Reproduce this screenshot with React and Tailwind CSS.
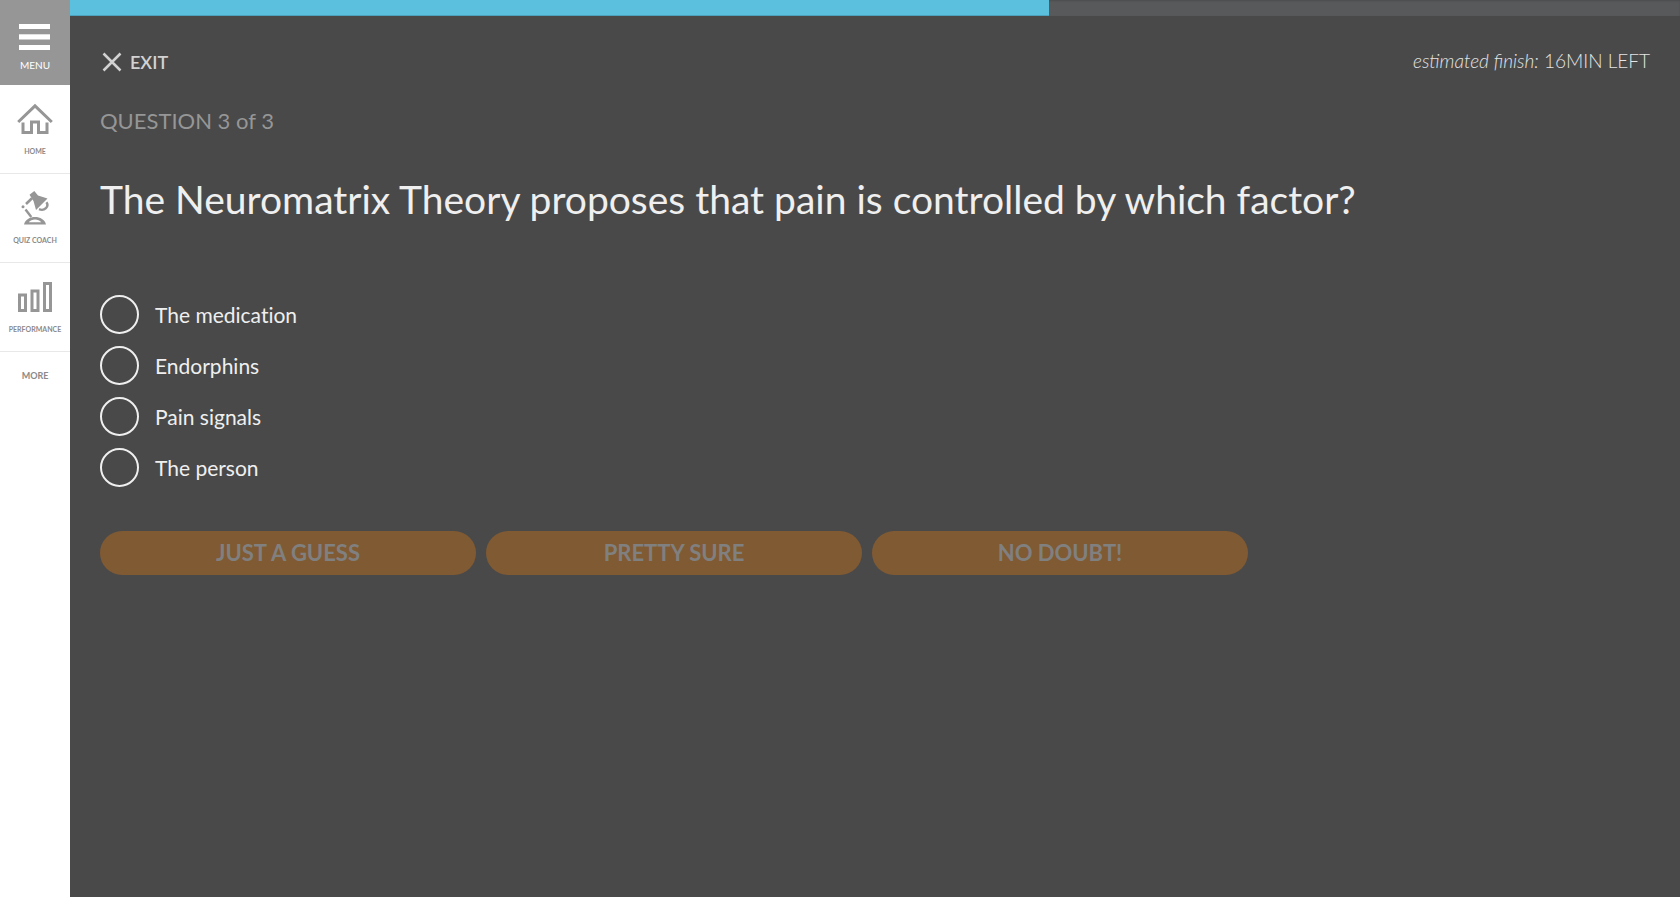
import React, { useState } from "react";

const ANSWERS = ["The medication", "Endorphins", "Pain signals", "The person"];
const CONFIDENCE = ["JUST A GUESS", "PRETTY SURE", "NO DOUBT!"];

function HomeIcon() {
  return (
    <svg width="36" height="32" viewBox="0 0 36 32" fill="none" stroke="#969696" strokeWidth="3" aria-hidden="true">
      <path d="M1.2 19 L18 2.8 L34.8 19" />
      <path d="M6 19.5 V29.5 H14.5 V19 H21.5 V29.5 H30 V19.5" />
    </svg>
  );
}

function LampIcon() {
  return (
    <svg width="30" height="36" viewBox="0 0 30 36" fill="none" stroke="#969696" aria-hidden="true">
      <path d="M9.5 4.8 L14.3 1 L18 5.5 L27.5 8.5 L16 20 L13.5 11 Z" fill="#969696" stroke="none" />
      <path d="M6 14 L12 8.2" strokeWidth="2.6" />
      <path d="M26.4 12.2 C29.5 16.5 24.5 21.5 19 19.2" strokeWidth="2.4" />
      <circle cx="3" cy="16.8" r="1.5" fill="#969696" stroke="none" />
      <path d="M5.5 19.5 L11.3 27" strokeWidth="2.4" />
      <path d="M4 34.5 C6 24.5 24 24.5 26 34.5 Z" fill="#969696" stroke="none" />
      <path d="M8.8 32.3 C11.5 28.6 18.5 28.6 21.2 32.3 Z" fill="#fff" stroke="none" />
    </svg>
  );
}

function BarsIcon() {
  return (
    <svg width="34" height="32" viewBox="0 0 34 32" fill="none" stroke="#969696" strokeWidth="3" aria-hidden="true">
      <rect x="1.5" y="14" width="6" height="15.5" />
      <rect x="14" y="10" width="6" height="19.5" />
      <rect x="26.5" y="2.5" width="6" height="27" />
    </svg>
  );
}

function SideLink({ icon, label }) {
  return (
    <a href="#" className="flex h-[89px] flex-col items-center justify-center gap-2 border-b border-[#e8e8e8] text-[#8a8a8a]">
      <span className="flex h-9 items-center">{icon}</span>
      <span className="whitespace-nowrap text-[7px] leading-3 font-bold">{label}</span>
    </a>
  );
}

export default function App() {
  const [answer, setAnswer] = useState(null);
  return (
    <div className="flex min-h-screen bg-[#494949] font-['Lato',sans-serif] text-[#efefef]">
      <nav className="flex w-[70px] shrink-0 flex-col bg-white">
        <button type="button" className="flex h-[85px] flex-col items-center bg-[#969696] pt-6 text-[10px] leading-3 text-white">
          <svg width="32" height="26" viewBox="0 0 32 26" fill="#fff" aria-hidden="true">
            <rect width="31" height="5" />
            <rect y="10.3" width="31" height="5.2" />
            <rect y="21" width="31" height="5" />
          </svg>
          <span className="mt-[9px]">MENU</span>
        </button>
        <SideLink icon={<HomeIcon />} label="HOME" />
        <SideLink icon={<LampIcon />} label="QUIZ COACH" />
        <SideLink icon={<BarsIcon />} label="PERFORMANCE" />
        <a href="#" className="flex h-12 items-center justify-center text-[9px] leading-3 font-bold text-[#8a8a8a]">
          MORE
        </a>
      </nav>

      <main className="flex-1">
        <div
          role="progressbar"
          aria-valuenow={61}
          aria-valuemin={0}
          aria-valuemax={100}
          aria-label="Quiz progress"
          className="h-4 bg-[#58595b] shadow-[inset_0_1px_2px_rgba(0,0,0,0.15)]"
        >
          <div className="h-full w-[60.8%] bg-[#5bc0de] shadow-[inset_0_-1px_0_rgba(0,0,0,0.15)]" />
        </div>

        <div className="px-[30px]">
          <header className="flex items-start justify-between pt-8 text-[#d2d2d2]">
            <button type="button" className="flex items-center gap-2 text-[18px] leading-7 font-semibold">
              <svg width="22" height="20" viewBox="0 0 22 20" fill="none" stroke="#d2d2d2" strokeWidth="2.5" aria-hidden="true">
                <path d="M3.5 1.5 L20.5 18.5 M20.5 1.5 L3.5 18.5" />
              </svg>
              EXIT
            </button>
            <p className="text-[19px] leading-[26px] font-light text-[#e4e4e4]">
              <em>estimated finish:</em> 16MIN LEFT
            </p>
          </header>

          <p className="mt-[31px] text-[22px] leading-7 text-[#969696]">QUESTION 3 of 3</p>
          <h1 className="mt-10 text-[39px] leading-[48px]">
            The Neuromatrix Theory proposes that pain is controlled by which factor?
          </h1>

          <div role="radiogroup" aria-label="Answers" className="mt-[72px] flex flex-col items-start gap-3">
            {ANSWERS.map((text) => (
              <label
                key={text}
                className="flex cursor-pointer items-center gap-4 text-[21px] leading-7 [font-variant-ligatures:none]"
              >
                <input
                  type="radio"
                  name="answer"
                  value={text}
                  checked={answer === text}
                  onChange={() => setAnswer(text)}
                  className="size-[39px] appearance-none rounded-full border-2 border-[#efefef] checked:bg-[#5bc0de]"
                />
                {text}
              </label>
            ))}
          </div>

          <div className="mt-11 grid max-w-[1148px] grid-cols-3 gap-2.5">
            {CONFIDENCE.map((text) => (
              <button
                key={text}
                type="button"
                disabled={answer === null}
                className="h-11 rounded-[22px] bg-[#f08c1e] text-[22px] leading-7 font-bold text-white disabled:bg-[#805a33] disabled:text-[#808080]"
              >
                {text}
              </button>
            ))}
          </div>
        </div>
      </main>
    </div>
  );
}
